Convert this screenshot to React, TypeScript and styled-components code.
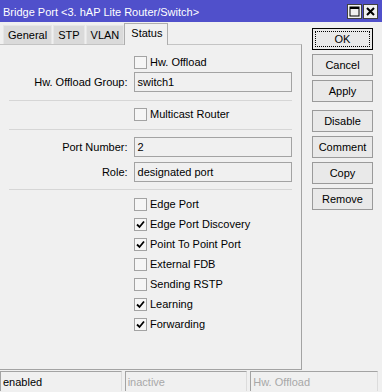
import styled, { createGlobalStyle } from 'styled-components';

const GlobalStyle = createGlobalStyle`
  html, body {
    margin: 0;
    padding: 0;
    background: #f0f0f0;
  }
  * {
    box-sizing: border-box;
  }
`;

const Window = styled.div`
  width: 382px;
  height: 392px;
  display: flex;
  flex-direction: column;
  background: #f0f0f0;
  font-family: 'Liberation Sans', Arial, sans-serif;
  font-size: 11px;
  color: #000;
  overflow: hidden;
`;

const TitleBar = styled.div`
  height: 22px;
  background: #5050cb;
  color: #fff;
  display: flex;
  align-items: center;
  padding: 0 4px 0 3px;
`;

const TitleText = styled.div`
  flex: 1;
  padding-top: 1px;
`;

const TitleButton = styled.div`
  width: 15px;
  height: 15px;
  margin-left: 1px;
  background: #f0f0f0;
  border: 1px solid #404040;
  display: flex;
  align-items: center;
  justify-content: center;
`;

const Body = styled.div`
  display: flex;
  height: 348px;
`;

const Main = styled.div`
  width: 302px;
  display: flex;
  flex-direction: column;
`;

const Tabs = styled.div`
  height: 22px;
  display: flex;
  align-items: flex-end;
  padding-left: 3px;
`;

const Tab = styled.div<{ $active?: boolean }>`
  height: ${(p) => (p.$active ? '22px' : '19px')};
  padding: ${(p) => (p.$active ? '0 5px 3px 6px' : '0 4px')};
  margin-right: ${(p) => (p.$active ? '0' : '1px')};
  margin-left: ${(p) => (p.$active ? '-1px' : '0')};
  margin-bottom: ${(p) => (p.$active ? '-1px' : '0')};
  background: ${(p) => (p.$active ? '#f0f0f0' : '#dadada')};
  border: 1px solid ${(p) => (p.$active ? '#adadad' : '#e6e6e6')};
  border-bottom: none;
  display: flex;
  align-items: center;
  position: relative;
  z-index: ${(p) => (p.$active ? 1 : 0)};
`;

const Panel = styled.div`
  flex: 1;
  border-top: 1px solid #c4c4c4;
  border-right: 1px solid #a3a3a3;
  border-bottom: 1px solid #a3a3a3;
  padding: 7px 9px 0 9px;
  display: flex;
  flex-direction: column;
`;

const Row = styled.div<{ $gap?: number }>`
  display: flex;
  align-items: center;
  height: 20px;
  margin-top: ${(p) => p.$gap ?? 0}px;
`;

const Label = styled.div`
  width: 125px;
  text-align: right;
  padding-right: 6px;
`;

const Field = styled.div`
  width: 159px;
  height: 20px;
  border: 1px solid #a3a3a3;
  background: #f0f0f0;
  padding-left: 3px;
  display: flex;
  align-items: center;
`;

const Separator = styled.div<{ $top: number; $bottom: number }>`
  height: 1px;
  background: #d6d6d6;
  margin: ${(p) => p.$top}px 0 ${(p) => p.$bottom}px 0;
`;

const Box = styled.span`
  width: 13px;
  height: 13px;
  margin-left: 125px;
  margin-right: 3px;
  border: 1px solid #a3a3a3;
  background: #f6f6f6;
  display: flex;
  align-items: center;
  justify-content: center;
`;

const Side = styled.div`
  flex: 1;
  padding: 6px 0 0 10px;
  display: flex;
  flex-direction: column;
`;

const Button = styled.div<{ $primary?: boolean; $space?: number }>`
  width: 61px;
  height: 22px;
  margin-bottom: 4px;
  margin-top: ${(p) => p.$space ?? 0}px;
  border: 1px solid ${(p) => (p.$primary ? '#000' : '#9a9a9a')};
  background: #e9e9e9;
  display: flex;
  align-items: center;
  justify-content: center;
  position: relative;

  &::after {
    content: '';
    position: absolute;
    inset: 2px;
    border: 1px dotted #000;
    display: ${(p) => (p.$primary ? 'block' : 'none')};
  }
`;

const StatusBar = styled.div`
  height: 22px;
  display: flex;
  gap: 3px;
  padding: 1px 4px 0 0;
`;

const StatusCell = styled.div<{ $dim?: boolean; $w: number }>`
  width: ${(p) => p.$w}px;
  height: 20px;
  border-top: 1px solid #a3a3a3;
  border-left: 1px solid #a3a3a3;
  border-right: 1px solid #dcdcdc;
  padding-left: 2px;
  display: flex;
  align-items: center;
  color: ${(p) => (p.$dim ? '#a8a8a8' : '#000')};
`;

function Check({ checked }: { checked?: boolean }) {
  return (
    <Box>
      {checked && (
        <svg width="9" height="9" viewBox="0 0 9 9">
          <path d="M1 4.5 L3.5 7 L8 1.5" stroke="#000" strokeWidth="1.8" fill="none" />
        </svg>
      )}
    </Box>
  );
}

function CheckRow({ label, checked }: { label: string; checked?: boolean }) {
  return (
    <Row>
      <Check checked={checked} />
      <span>{label}</span>
    </Row>
  );
}

const flags: [string, boolean][] = [
  ['Edge Port', false],
  ['Edge Port Discovery', true],
  ['Point To Point Port', true],
  ['External FDB', false],
  ['Sending RSTP', false],
  ['Learning', true],
  ['Forwarding', true],
];

export default function App() {
  return (
    <Window>
      <GlobalStyle />
      <TitleBar>
        <TitleText>Bridge Port &lt;3. hAP Lite Router/Switch&gt;</TitleText>
        <TitleButton>
          <svg width="11" height="11" viewBox="0 0 11 11">
            <rect x="1" y="1" width="9" height="9" stroke="#000" strokeWidth="1" fill="none" />
            <rect x="1" y="1" width="9" height="2" fill="#000" />
          </svg>
        </TitleButton>
        <TitleButton>
          <svg width="11" height="11" viewBox="0 0 11 11">
            <path d="M2 2 L9 9 M9 2 L2 9" stroke="#000" strokeWidth="2" />
          </svg>
        </TitleButton>
      </TitleBar>
      <Body>
        <Main>
          <Tabs>
            <Tab>General</Tab>
            <Tab>STP</Tab>
            <Tab>VLAN</Tab>
            <Tab $active>Status</Tab>
          </Tabs>
          <Panel>
            <CheckRow label="Hw. Offload" />
            <Row>
              <Label>Hw. Offload Group:</Label>
              <Field>switch1</Field>
            </Row>
            <Separator $top={8} $bottom={3} />
            <CheckRow label="Multicast Router" />
            <Separator $top={5} $bottom={7} />
            <Row>
              <Label>Port Number:</Label>
              <Field>2</Field>
            </Row>
            <Row $gap={5}>
              <Label>Role:</Label>
              <Field>designated port</Field>
            </Row>
            <Separator $top={7} $bottom={4} />
            {flags.map(([label, checked]) => (
              <CheckRow key={label} label={label} checked={checked} />
            ))}
          </Panel>
        </Main>
        <Side>
          <Button $primary>OK</Button>
          <Button>Cancel</Button>
          <Button>Apply</Button>
          <Button $space={4}>Disable</Button>
          <Button>Comment</Button>
          <Button>Copy</Button>
          <Button>Remove</Button>
        </Side>
      </Body>
      <StatusBar>
        <StatusCell $w={122}>enabled</StatusCell>
        <StatusCell $w={123} $dim>inactive</StatusCell>
        <StatusCell $w={128} $dim>Hw. Offload</StatusCell>
      </StatusBar>
    </Window>
  );
}
